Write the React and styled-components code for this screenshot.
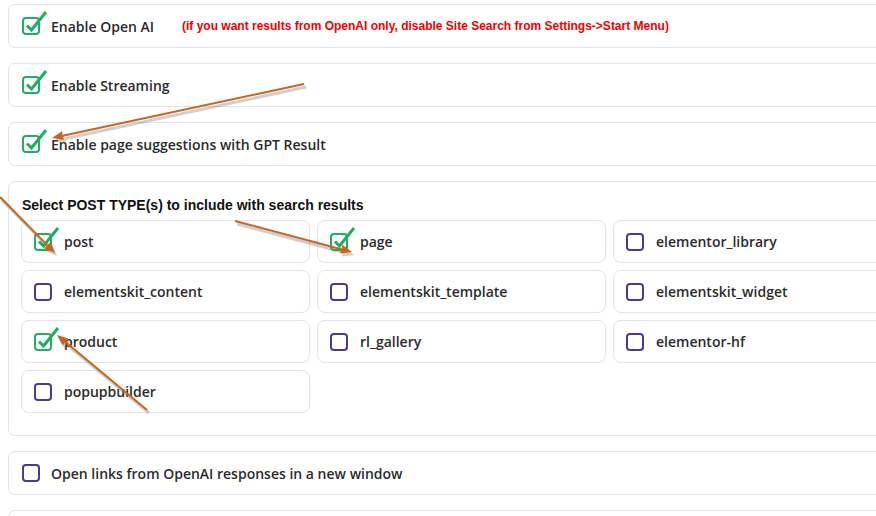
import React from "react";
import styled, { createGlobalStyle } from "styled-components";

const GlobalStyle = createGlobalStyle`
  html, body {
    margin: 0;
    padding: 0;
    background: #ffffff;
    overflow: hidden;
  }
`;

const Page = styled.div`
  position: relative;
  width: 930px;
  padding: 4px 0 0 8px;
  font-family: "Open Sans", "Liberation Sans", Arial, sans-serif;
`;

const Card = styled.div`
  box-sizing: border-box;
  border: 1px solid #e4e1f1;
  border-radius: 7px;
  background: #fff;
  margin-bottom: 15px;
  padding: ${(p) => (p.$block ? "14px 12px 22px" : "0 13px")};
  height: ${(p) => (p.$block ? "auto" : "44px")};
  display: ${(p) => (p.$block ? "block" : "flex")};
  align-items: center;
`;

const Label = styled.span`
  font-size: 14px;
  font-weight: 600;
  color: #2b2b2b;
  margin-left: ${(p) => p.$gap || 11}px;
`;

const Note = styled.span`
  font-family: "Liberation Sans", Arial, sans-serif;
  font-weight: 700;
  font-size: 12px;
  color: #f10000;
  margin-left: 28px;
`;

const Title = styled.div`
  font-family: "Liberation Sans", Arial, sans-serif;
  font-weight: 700;
  font-size: 14px;
  line-height: 16px;
  color: #111;
  margin: 1px 0 0 1px;
  height: 23px;
`;

const Grid = styled.div`
  display: grid;
  grid-template-columns: repeat(3, 289px);
  grid-auto-rows: 43px;
  gap: 7px;
`;

const Item = styled.div`
  box-sizing: border-box;
  border: 1px solid #e4e1f1;
  border-radius: 8px;
  display: flex;
  align-items: center;
  padding-left: 12px;
`;

const Box = styled.span`
  box-sizing: border-box;
  display: inline-block;
  width: 18px;
  height: 18px;
  border: 2px solid #4a3b8c;
  border-radius: 4px;
  flex: none;
`;

const CheckSvg = styled.svg`
  flex: none;
  overflow: visible;
`;

const Overlay = styled.svg`
  position: absolute;
  left: 0;
  top: 0;
  pointer-events: none;
`;

function Checkbox({ on }) {
  if (!on) return <Box />;
  return (
    <CheckSvg width="18" height="18" viewBox="0 0 18 18">
      <rect x="1" y="1" width="16" height="16" rx="3" fill="none" stroke="#1fae62" strokeWidth="2" />
      <path d="M5 8.5 L9.5 13 L24 -5" fill="none" stroke="#1fae62" strokeWidth="3" strokeLinejoin="miter" />
    </CheckSvg>
  );
}

const types = [
  { name: "post", on: true },
  { name: "page", on: true },
  { name: "elementor_library" },
  { name: "elementskit_content" },
  { name: "elementskit_template" },
  { name: "elementskit_widget" },
  { name: "product", on: true },
  { name: "rl_gallery" },
  { name: "elementor-hf" },
  { name: "popupbuilder" },
];

const arrows = [
  [304, 84, 52, 138],
  [0, 197, 55, 253],
  [235, 221, 352, 252],
  [147, 410, 57, 335],
];

function Arrow({ x1, y1, x2, y2 }) {
  const a = Math.atan2(y2 - y1, x2 - x1);
  const len = 11;
  const w = 4.5;
  const bx = x2 - Math.cos(a) * len;
  const by = y2 - Math.sin(a) * len;
  const px = -Math.sin(a) * w;
  const py = Math.cos(a) * w;
  const head = `${x2},${y2} ${bx + px},${by + py} ${bx - px},${by - py}`;
  return (
    <g>
      <g opacity="0.35" transform="translate(2,3)">
        <line x1={x1} y1={y1} x2={bx} y2={by} stroke="#777" strokeWidth="3" />
        <polygon points={head} fill="#777" />
      </g>
      <line x1={x1} y1={y1} x2={bx} y2={by} stroke="#c9651c" strokeWidth="2" />
      <polygon points={head} fill="#c9651c" />
    </g>
  );
}

export default function App() {
  return (
    <>
      <GlobalStyle />
      <Page>
        <Card>
          <Checkbox on />
          <Label>Enable Open AI</Label>
          <Note>(if you want results from OpenAI only, disable Site Search from Settings-&gt;Start Menu)</Note>
        </Card>
        <Card>
          <Checkbox on />
          <Label>Enable Streaming</Label>
        </Card>
        <Card>
          <Checkbox on />
          <Label>Enable page suggestions with GPT Result</Label>
        </Card>
        <Card $block>
          <Title>Select POST TYPE(s) to include with search results</Title>
          <Grid>
            {types.map((t) => (
              <Item key={t.name}>
                <Checkbox on={t.on} />
                <Label $gap={12}>{t.name}</Label>
              </Item>
            ))}
          </Grid>
        </Card>
        <Card>
          <Box />
          <Label>Open links from OpenAI responses in a new window</Label>
        </Card>
        <Card />
        <Overlay width="876" height="516">
          {arrows.map(([x1, y1, x2, y2], i) => (
            <Arrow key={i} x1={x1} y1={y1} x2={x2} y2={y2} />
          ))}
        </Overlay>
      </Page>
    </>
  );
}
